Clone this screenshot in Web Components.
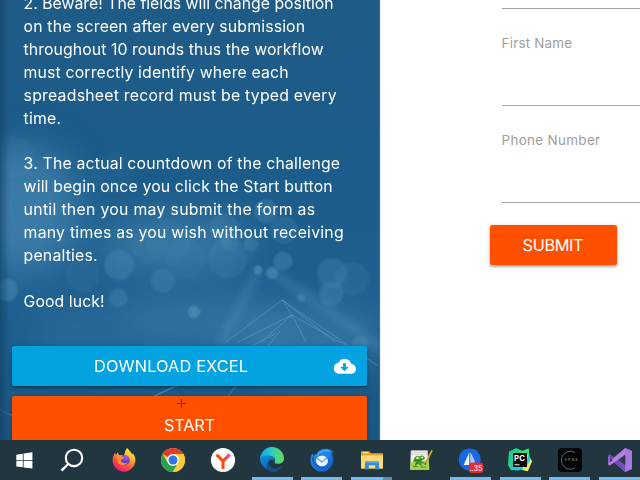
<!DOCTYPE html>
<html lang="en">
<head>
<meta charset="utf-8">
<title>RPA Challenge</title>
<style>
html,body{margin:0;width:640px;height:480px;overflow:hidden;background:#fff;font-family:Inter,"Liberation Sans",sans-serif}
</style>
</head>
<body>
<challenge-screen></challenge-screen>
<script>
class BaseEl extends HTMLElement {
  constructor(){
    super();
    this.attachShadow({mode:'open'}).innerHTML = this.view();
  }
}

/* One line of text whose tracking is set so that it fills the width w. */
class FitText extends HTMLElement {
  connectedCallback(){
    if(this.shadowRoot) return;
    this.attachShadow({mode:'open'}).innerHTML =
      '<style>:host{display:block;white-space:nowrap;width:max-content}span{display:inline-block}</style><span></span>';
    const s = this.shadowRoot.querySelector('span');
    s.textContent = this.getAttribute('text');
    const n = s.textContent.length, w = +this.getAttribute('w');
    s.style.letterSpacing = '0px';
    const sp = (w - s.getBoundingClientRect().width) / (n - 1);
    s.style.letterSpacing = sp + 'px';
    s.style.marginRight = -sp + 'px';
  }
}
customElements.define('fit-text', FitText);

customElements.define('bokeh-backdrop', class extends BaseEl {
  view(){ return `<style>:host{display:block;position:absolute;inset:0}svg{display:block}</style>
  <svg width="380" height="440" viewBox="0 0 380 440">
   <defs>
    <linearGradient id="g" x1="0" y1="0" x2="0" y2="1"><stop offset="0" stop-color="#205b87"/><stop offset=".38" stop-color="#1b5c8a"/><stop offset=".7" stop-color="#1f6090"/><stop offset="1" stop-color="#195681"/></linearGradient>
    <linearGradient id="e" x1="0" x2="1"><stop offset="0" stop-color="#123f60" stop-opacity=".6"/><stop offset="1" stop-color="#123f60" stop-opacity="0"/></linearGradient>
    <filter id="b" x="-50%" y="-50%" width="200%" height="200%"><feGaussianBlur stdDeviation="18"/></filter>
    <filter id="c"><feGaussianBlur stdDeviation=".8"/></filter>
    <filter id="d" x="-50%" y="-50%" width="200%" height="200%"><feGaussianBlur stdDeviation="4"/></filter>
   </defs>
   <rect width="380" height="440" fill="url(#g)"/>
   <g filter="url(#b)" fill="#4d8db8">
    <ellipse cx="25" cy="210" rx="55" ry="64" opacity=".62"/>
    <ellipse cx="175" cy="243" rx="78" ry="30" opacity=".5"/>
    <ellipse cx="200" cy="325" rx="95" ry="28" opacity=".42"/>
    <ellipse cx="310" cy="338" rx="75" ry="30" opacity=".45"/>
    <ellipse cx="70" cy="335" rx="40" ry="25" opacity=".25"/>
   </g>
   <g fill="#5796bd" filter="url(#c)">
    <circle cx="14" cy="157" r="21" opacity=".12"/><circle cx="113" cy="173" r="21" opacity=".08"/>
    <circle cx="7" cy="290" r="11" opacity=".42"/><circle cx="119" cy="265" r="15" opacity=".3"/>
    <circle cx="118" cy="298" r="9.5" opacity=".3"/><circle cx="163" cy="281" r="12" opacity=".24"/>
    <circle cx="83" cy="275" r="17" opacity=".1"/><circle cx="168" cy="242" r="22" opacity=".08"/>
    <circle cx="186" cy="258" r="20" opacity=".08"/><circle cx="149" cy="245" r="18" opacity=".07"/>
    <circle cx="266" cy="211" r="12" opacity=".3"/><circle cx="284" cy="230" r="14" opacity=".2"/>
    <circle cx="224" cy="227" r="14" opacity=".18"/><circle cx="229" cy="242" r="9" opacity=".22"/>
    <circle cx="251" cy="244" r="7.5" opacity=".3"/><circle cx="228" cy="258" r="20" opacity=".15"/>
    <circle cx="283" cy="261" r="9.5" opacity=".35"/><circle cx="258" cy="270" r="4.5" opacity=".6"/>
    <circle cx="272" cy="273" r="6" opacity=".55"/><circle cx="332" cy="273" r="15" opacity=".25"/>
    <circle cx="352" cy="279" r="17" opacity=".16"/><circle cx="331" cy="294" r="12" opacity=".3"/>
    <circle cx="194" cy="312" r="6.2" opacity=".6"/><circle cx="301" cy="298" r="4" opacity=".5"/>
    <circle cx="360" cy="345" r="9" opacity=".35"/>
   </g>
   <g filter="url(#d)" fill="none" stroke="#5b9cc5" opacity=".35" stroke-width="7"><path d="M272 272L385 350M258 272L220 345"/></g>
   <g fill="none" stroke="#8fc0de" stroke-width=".8" opacity=".42">
    <path d="M226 342L282 300L335 342M282 300L292 315L238 342M292 315L261 342M292 315L306 342M292 315L345 345M282 300L378 366M145 400L182 384M280 331L225 400M0 410L30 424M155 396L275 334"/>
   </g>
   <rect width="9" height="440" fill="url(#e)"/>
   <rect x="379" width="1" height="440" fill="#4d7a9e" opacity=".5"/>
  </svg>`; }
});

customElements.define('action-button', class extends BaseEl {
  view(){ return `<style>
   :host{display:grid;place-items:center;box-sizing:border-box;position:relative;height:39.5px;border-radius:2px;
     background:var(--fill,#ff5000);color:#fff;font-size:16.3px;line-height:24px;box-shadow:0 2px 2px rgba(0,0,0,.2),0 1px 4px rgba(0,0,0,.22)}
   ::slotted(svg){position:absolute;right:11.5px;top:11.5px}
  </style><slot></slot>`; }
});

customElements.define('instruction-panel', class extends BaseEl {
  view(){
    const a=[['2. Beware! The fields will change position',310],['on the screen after every submission',281.5],['throughout 10 rounds thus the workflow',300],['must correctly identify where each',265],['spreadsheet record must be typed every',313],['time.',37.5]];
    const b=[['3. The actual countdown of the challenge',316.5],['will begin once you click the Start button',309],['until then you may submit the form as',291.5],['many times as you wish without receiving',320],['penalties.',74]];
    const p = l => '<div class="p">'+l.map(x=>`<fit-text text="${x[0]}" w="${x[1]}"></fit-text>`).join('')+'</div>';
    return `<style>
     :host{display:block;position:relative;width:380px;height:440px;overflow:hidden;color:#fff}
     .copy{position:relative;padding:0 23.6px;margin-top:-8px;height:354px;font-size:15.8px;line-height:23px;font-weight:400}
     .p{margin-bottom:22.4px}
     .buttons{position:relative;display:grid;gap:10px;padding:0 13px 0 12px}
     .start{height:59px}
     .mark{position:absolute;left:177px;top:399px}
    </style>
    <bokeh-backdrop></bokeh-backdrop>
    <div class="copy">${p(a)}${p(b)}${p([['Good luck!',81]])}</div>
    <div class="buttons">
     <action-button style="--fill:#03a2e1;padding-right:37px"><fit-text text="DOWNLOAD EXCEL" w="154"></fit-text>
      <svg width="23" height="17" viewBox="0 0 23 17"><path d="M18.4 6.1A7 7 0 0 0 5.4 4.7 5.7 5.7 0 0 0 .8 10.3C.8 13.4 3.2 15.8 6.3 15.8H18A4.7 4.7 0 0 0 18.4 6.1ZM15.7 9L11.5 13.2 7.3 9H10V5.2H13V9Z" fill="#fff"/></svg>
     </action-button>
     <action-button class="start"><fit-text text="START" w="51"></fit-text></action-button>
    </div>
    <svg class="mark" width="9" height="9"><path d="M0 4.5H9M4.5 0V9" stroke="#e00000"/></svg>`;
  }
});

customElements.define('form-field', class extends BaseEl {
  view(){ return `<style>:host{display:block;box-sizing:border-box;height:97px;padding-top:24px;border-bottom:1px solid #a5a5a5;color:#9e9e9e;font-size:13.4px;line-height:20px}</style><slot></slot>`; }
});

customElements.define('entry-form', class extends BaseEl {
  view(){ return `<style>:host{display:block;flex:1;box-sizing:border-box;padding-left:108.6px;background:#fff;border-left:1px solid #edf2fa;overflow:hidden}
    .fields{margin:-88px 0 22px 12px}
    action-button{width:127px}
   </style>
   <div class="fields"><form-field></form-field>
   <form-field><fit-text text="First Name" w="70.5"></fit-text></form-field>
   <form-field><fit-text text="Phone Number" w="98.5"></fit-text></form-field></div>
   <action-button><fit-text text="SUBMIT" w="61"></fit-text></action-button>`; }
});

const ICONS = {
 win:`<path d="M4.3 6.7L10.8 5.7V12.2H4.3ZM11.6 5.6L20.4 4.3V12.2H11.6ZM4.3 13H10.8V19.3L4.3 18.5ZM11.6 13H20.4V20.6L11.6 19.4Z" fill="#fff"/>`,
 find:`<circle cx="14" cy="9.9" r="8.2" fill="none" stroke="#fff" stroke-width="2.1"/><path d="M8.2 16L1.5 22.7" stroke="#fff" stroke-width="2.4"/>`,
 firefox:`<defs><linearGradient id="f" x1=".8" y1="0" x2=".25" y2="1"><stop stop-color="#fff04a"/><stop offset=".35" stop-color="#ffb32c"/><stop offset=".65" stop-color="#ff503d"/><stop offset="1" stop-color="#e31587"/></linearGradient><radialGradient id="p" cx=".65" cy=".2"><stop stop-color="#b05cf2"/><stop offset="1" stop-color="#5940c9"/></radialGradient></defs>
  <path d="M15.2 0C17 2 19 4.2 20.3 6.5L21 5.2C23 8 23.8 11 23.2 14A11.4 11.4 0 0 1 .6 13.5C.4 10 1.5 7 3.1 4.8L4 7 5.6 4.3 7 7.1C9 6.8 10 7.5 12 7.5 13 5 13 2 15.2 0Z" fill="url(#f)"/><circle cx="12.6" cy="12" r="5.1" fill="url(#p)"/><path d="M5 7.7C7.5 6.8 9 8 12.4 9.4 11.7 11.2 9.7 10.6 8.9 12.2 9.1 14.7 12 16 15.3 14.4 11.6 20 3 16.5 5 7.7Z" fill="#ff8d2f"/>`,
 chrome:`<circle cx="12" cy="12" r="12" fill="#fc4"/><path d="M12 12L1.6 6A12 12 0 0 1 22.4 6H12Z" fill="#e33b2e"/><path d="M1.6 6A12 12 0 0 0 11.7 24L17.2 15 7 15Z" fill="#27a350"/><path d="M22.4 6A12 12 0 0 1 11.7 24L17.2 15 18 9.5 16 6Z" fill="#fdcb3b"/><circle cx="12" cy="12" r="5.9" fill="#fff"/><circle cx="12" cy="12" r="4.5" fill="#2c78e8"/>`,
 yandex:`<circle cx="12" cy="12" r="12.1" fill="#fff"/><path d="M5.6 6.7L12 13.1M18.4 6.7L12 13.1V21" fill="none" stroke="#ff4b13" stroke-width="3.1"/><path d="M18.7 6.5L15.8 9.4" stroke="#ef48aa" stroke-width="3.1"/>`,
 edge:`<defs><linearGradient id="a" x1="0" x2="1"><stop stop-color="#139fe0"/><stop offset=".45" stop-color="#28c9cf"/><stop offset="1" stop-color="#68df50"/></linearGradient><linearGradient id="h" x1="0" y1="0" x2="1" y2="1"><stop stop-color="#128bd2"/><stop offset="1" stop-color="#0c63b5"/></linearGradient></defs><path d="M0 11.5A12 12 0 0 1 24 10.6C24 15 19.5 16.6 16 15.5 14 15 14.6 13.8 15.1 12.6 15.6 9.3 11 7.3 7.5 7.8 3.5 8.2 1.5 9.8 0 11.5Z" fill="url(#a)"/><path d="M0 12C1 8.7 5 7 8.8 7.7 13.2 8.2 15.7 10.8 14.7 13.3 13 10 8.2 11.6 8.4 15.2 8.7 19.3 12.8 22 17.7 20.6A12 12 0 0 1 0 12Z" fill="url(#h)"/><path d="M8.5 14C7.3 19.5 13 21 16 20.4 19 20 20.6 18 22.2 17.8 19 23.5 14 25 10.3 23.5 5.6 21.5 5 15.7 9.7 12Z" fill="#12508f"/>`,
 bird:`<defs><linearGradient id="t" x1="0" y1="0" x2="1" y2="1"><stop stop-color="#2795ef"/><stop offset="1" stop-color="#1456c2"/></linearGradient></defs><path d="M8 3.4C12 .2 19 .2 21.3 2.5L23.8 3.6 21.6 5.3C25.5 12 22.6 20 16 23 8.5 25.8 1 20.2.5 13 .2 10.8.8 7.8 2.6 5.6L3.8 8.5 5.4 5.3 6 7.2Z" fill="url(#t)"/><ellipse cx="12" cy="12.8" rx="6" ry="5.6" fill="#eaf6ff"/><path d="M6.4 9.8L11.8 14 17.5 9.5" fill="none" stroke="#5ba7e4" stroke-width="1.2"/><path d="M6.3 10C7.5 3 15 0 21 2.4 21.5 7 19 10 17 11 16.5 7.5 11 5.5 6.3 10Z" fill="#2383e0"/><path d="M7 7.5C9.5 3.5 15 1.6 19.5 2.8" fill="none" stroke="#4fb4f7" stroke-width="1.2"/><path d="M3 9C2 16 8 20 14 20" fill="none" stroke="#1160c5" stroke-width="2"/>`,
 folder:`<path d="M1 3.2H9L11 5.3H23V20.5H1Z" fill="#e6a532"/><path d="M1 7.5H23V20.5H1Z" fill="#ffda72"/><path d="M3 4.7H8" stroke="#fff0ae"/><path d="M5 21.6V13.5H19V21.6H15.2V17.2H8.8V21.6Z" fill="#338fd5"/><path d="M5 13.5H19V15H5Z" fill="#4ba8e5"/>`,
 notes:`<path d="M2 2.5H18.5L20 21.5H1.4Z" fill="#f3f5ef" stroke="#aaa" stroke-width=".7"/><path d="M1.8 14L19.6 12 20 21.5H1.4Z" fill="#a7d54c"/><path d="M2.5 4.2H18M2.5 6.3H18" stroke="#b3b3b3" stroke-width=".6"/><path d="M5 11C6 7.5 9 7 10.5 8.4 12.5 6.6 15.5 7.5 16 10.3L12 12.5 17 15.6 12 15.5 14 18.5 9 16 5.5 18.5 7 14.6 3.8 13.6Z" fill="#4a9a2c"/><path d="M6 11.5C9 13.5 12 12.5 15.5 10.4M6 16.5L9 14.5" fill="none" stroke="#245d17" stroke-width=".8"/><circle cx="8.5" cy="9.9" r="1.2" fill="#e9f4d1"/><circle cx="13.2" cy="9.6" r="1.1" fill="#e9f4d1"/><path d="M4 18.6H9M11 19H17" stroke="#3c7d22" stroke-width=".8"/><path d="M23.1 2.1L17 14.6" stroke="#d69b30" stroke-width="1.8"/><path d="M17 14.6L16 17" stroke="#6a4928"/>`,
 sail:`<circle cx="10.7" cy="11.5" r="11" fill="#1768e5"/><path d="M10.2 4.4V17H4.7Z" fill="#fff"/><path d="M11.2 4.2C14 8 16 12.3 16.2 17H11.2Z" fill="#a9cdfb"/><rect x="9.8" y="14.5" width="14.5" height="10.5" rx="3" fill="#e52b35"/><text x="10.5" y="23.1" font-family="Inter" font-size="8.2" fill="#fff" textLength="13" lengthAdjust="spacingAndGlyphs">..35</text>`,
 pycharm:`<path d="M1 3.8L8.2.2 15 3 20.7.5 21.3 8 24 13.2 19.7 23.3 10.3 21.2 3 22.2.3 17.4Z" fill="#31d882"/><path d="M1 3.8L8.2.2 11 6 4 20 .3 17.4Z" fill="#23cf90"/><path d="M14 3L20.7.5 21.3 8 14 12Z" fill="#35e76e"/><path d="M20 7L24 13.2 19.7 23.3 15 22V8Z" fill="#f5e957"/><path d="M4 18L15 20 11 22.5 3 22Z" fill="#1bcbe0"/><path d="M20 7L22.7 11 17 21Z" fill="#23c7dd"/><rect x="5" y="5" width="14" height="14" fill="#050505"/><text x="6.1" y="12.5" font-family="Inter" font-size="7.6" font-weight="700" fill="#fff" textLength="10.8" lengthAdjust="spacingAndGlyphs">PC</text><path d="M6.5 16.8H11.5" stroke="#fff"/>`,
 dark:`<rect width="24" height="24" rx="4" fill="#030505"/><path d="M17 4.5A9 9 0 1 0 17 20" fill="none" stroke="#6d7375" stroke-width=".9"/><text x="6.4" y="13.4" font-family="Inter" font-size="3.4" fill="#a0a5a7" textLength="13.5">VPNK</text>`,
 vs:`<path d="M17 0L24 3V21L17 24 5.6 14.1 2 17.4 0 16.3V7.7L2 6.6 5.6 9.9Z" fill="#9460cf"/><path d="M0 7.7L2 6.6 17.5 18V24L5.6 14.1Z" fill="#754abd"/><path d="M0 16.3L2 17.4 17.5 6V0L5.6 9.9Z" fill="#b184e2"/><path d="M17 0L24 3V21L17 24Z" fill="#a878de"/><path d="M17.3 6.8V17.2L10.2 12Z" fill="#293b46"/><path d="M2.2 9.7L4.4 12 2.2 14.3Z" fill="#293b46"/>`
};
class TaskIcon extends HTMLElement {
  connectedCallback(){
    if(this.shadowRoot) return;
    const open = this.hasAttribute('open');
    this.attachShadow({mode:'open'}).innerHTML = `<style>
     :host{display:flex;flex-direction:column;align-items:center;width:49.6px;height:40px;flex:none}
     svg{display:block;overflow:visible;margin:8px 0 5px}
     i{display:block;height:3px;width:41px;background:${open?(this.id==='files'?'linear-gradient(90deg,#76b9ed 32px,#5b8eb5 32px)':'#76b9ed'):'none'}}
    </style><svg width="24" height="24" viewBox="0 0 24 24">${ICONS[this.getAttribute('icon')]}</svg><i></i>`;
  }
}
customElements.define('task-icon', TaskIcon);

customElements.define('task-bar', class extends BaseEl {
  view(){ return `<style>:host{display:flex;height:40px;background:#22363f;overflow:hidden}
    .sys{width:48px}.find{width:48px;margin-right:2.8px}
   </style>
   <task-icon class="sys" icon="win"></task-icon><task-icon class="find" icon="find"></task-icon>
   <task-icon icon="firefox"></task-icon><task-icon icon="chrome"></task-icon><task-icon icon="yandex"></task-icon>
   <task-icon icon="edge" open></task-icon><task-icon icon="bird" open></task-icon><task-icon id="files" icon="folder" open></task-icon>
   <task-icon icon="notes"></task-icon><task-icon icon="sail" open></task-icon><task-icon icon="pycharm" open></task-icon>
   <task-icon icon="dark" open></task-icon><task-icon icon="vs" open></task-icon>`; }
});

customElements.define('challenge-screen', class extends BaseEl {
  view(){ return `<style>:host{display:block;width:640px;height:480px;overflow:hidden}main{display:flex;height:440px}</style>
   <main><instruction-panel></instruction-panel><entry-form></entry-form></main><task-bar></task-bar>`; }
});
</script>
</body>
</html>
